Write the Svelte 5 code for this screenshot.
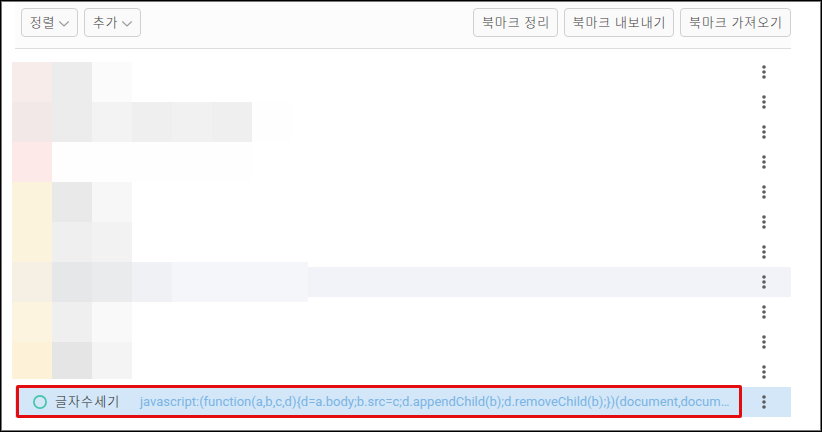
<script>
  const rows = Array.from({ length: 12 }, (_, i) => i);
  const exportActions = [
    { label: '북마크 정리', width: 85 },
    { label: '북마크 내보내기', width: 110 },
    { label: '북마크 가져오기', width: 111 }
  ];
  // Pixelated cover: each line lists [width, colour] cells.
  const mosaic = [
    [[40, '#f7ecea'], [40, '#ececec'], [40, '#fbfbfb']],
    [[40, '#f3e8e8'], [40, '#ececec'], [40, '#f3f3f3'], [40, '#efefef'], [40, '#f1f1f1'], [40, '#efefef'], [40, '#fefefe']],
    [[40, '#fdeae8'], [200, '#fefefe']],
    [[40, '#fbf3dc'], [40, '#e9e9e9'], [40, '#f7f7f7']],
    [[40, '#fbf3dc'], [40, '#efefef'], [40, '#f2f2f2']],
    [[40, '#f6efe3'], [40, '#e5e7e9'], [40, '#eaebed'], [40, '#eff1f5'], [136, '#f4f6fa']],
    [[40, '#fdf4e0'], [40, '#efefef'], [40, '#f9f9f9']],
    [[40, '#fdf2d8'], [40, '#e5e5e5'], [40, '#f4f4f4']]
  ];
</script>

{#snippet chevron()}
  <svg class="chevron" width="12" height="8" viewBox="0 0 12 8"><path d="M1.3 1.5 6 6l4.7-4.5" /></svg>
{/snippet}

<main>
  <header>
    <div class="group">
      <button class="drop"><span>정렬</span>{@render chevron()}</button>
      <button class="drop"><span>추가</span>{@render chevron()}</button>
    </div>
    <div class="group">
      {#each exportActions as action}
        <button style:width="{action.width}px"><span>{action.label}</span></button>
      {/each}
    </div>
  </header>

  <section class="list">
    {#each rows as i}
      <div class="row" class:hover={i === 7} class:selected={i === 11}>
        {#if i === 11}
          <svg class="ring" width="16" height="16" viewBox="0 0 16 16"><circle cx="8" cy="8" r="6.1" /></svg>
          <span class="name">글자수세기</span>
          <span class="url">javascript:(function(a,b,c,d)&#123;d=a.body;b.src=c;d.appendChild(b);d.removeChild(b);&#125;)(document,docum…</span>
        {/if}
        <svg class="more" width="6" height="16" viewBox="0 0 6 16">
          <circle cx="3" cy="3" r="1.8" /><circle cx="3" cy="8" r="1.8" /><circle cx="3" cy="13" r="1.8" />
        </svg>
      </div>
    {/each}
  </section>

  <div class="mosaic">
    {#each mosaic as line}
      <div class="line">
        {#each line as [width, color]}
          <i style:width="{width}px" style:background={color}></i>
        {/each}
      </div>
    {/each}
  </div>
  <div class="highlight"></div>
</main>

<style>
  main {
    position: relative;
    box-sizing: border-box;
    width: 822px;
    height: 432px;
    padding: 1px 30px 0 14px;
    overflow: hidden;
    border: 1px solid #000;
    box-shadow: inset 0 0 0 1px #777;
    background: #fff;
    font-family: Roboto, "Noto Sans CJK KR", sans-serif;
    color: #444;
  }
  header {
    box-sizing: border-box;
    display: flex;
    justify-content: space-between;
    width: 776px;
    height: 47px;
    padding: 6px 0 0 6px;
    background: #fcfcfc;
    border-bottom: 1px solid #ddd;
  }
  .group { display: flex; gap: 6px; }
  button {
    box-sizing: border-box;
    display: flex;
    align-items: center;
    justify-content: center;
    height: 29px;
    padding: 0 0 2px 1px;
    border: 1px solid #d0d0d0;
    border-radius: 4px;
    background: #fafafa;
    color: #3c3c3c;
    font: 300 13px/25px "Noto Sans CJK KR", sans-serif;
    letter-spacing: 0.9px;
    white-space: nowrap;
  }
  .drop { width: 57px; gap: 3px; }
  .chevron { fill: none; stroke: #999; stroke-width: 1.1; margin-top: 4px; }
  .list { padding-top: 8px; width: 776px; }
  .row {
    display: flex;
    align-items: center;
    height: 30px;
    box-sizing: border-box;
    padding: 0 24px 0 17px;
  }
  .hover { background: #f2f3f8; }
  .selected { background: #d4e7f8; }
  .ring { fill: none; stroke: #45c4ad; stroke-width: 1.7; }
  .name {
    box-sizing: border-box;
    width: 92px;
    padding: 0 0 2px 7px;
    font: 300 13px/26px "Noto Sans CJK KR", sans-serif;
    letter-spacing: 1.1px;
    color: #222;
    white-space: nowrap;
  }
  .url {
    font-size: 13px;
    line-height: 28px;
    color: #79b4e4;
    white-space: nowrap;
  }
  .more { margin-left: auto; fill: #5c5c5c; }
  .mosaic { position: absolute; left: 11px; top: 61px; }
  .line { display: flex; height: 40px; }
  .line:last-child { height: 37px; }
  .line i { display: block; height: 100%; }
  .highlight {
    position: absolute;
    left: 15px;
    top: 384px;
    width: 726px;
    height: 33px;
    box-sizing: border-box;
    border: 3px solid #e30d10;
    border-radius: 2px;
  }
</style>
